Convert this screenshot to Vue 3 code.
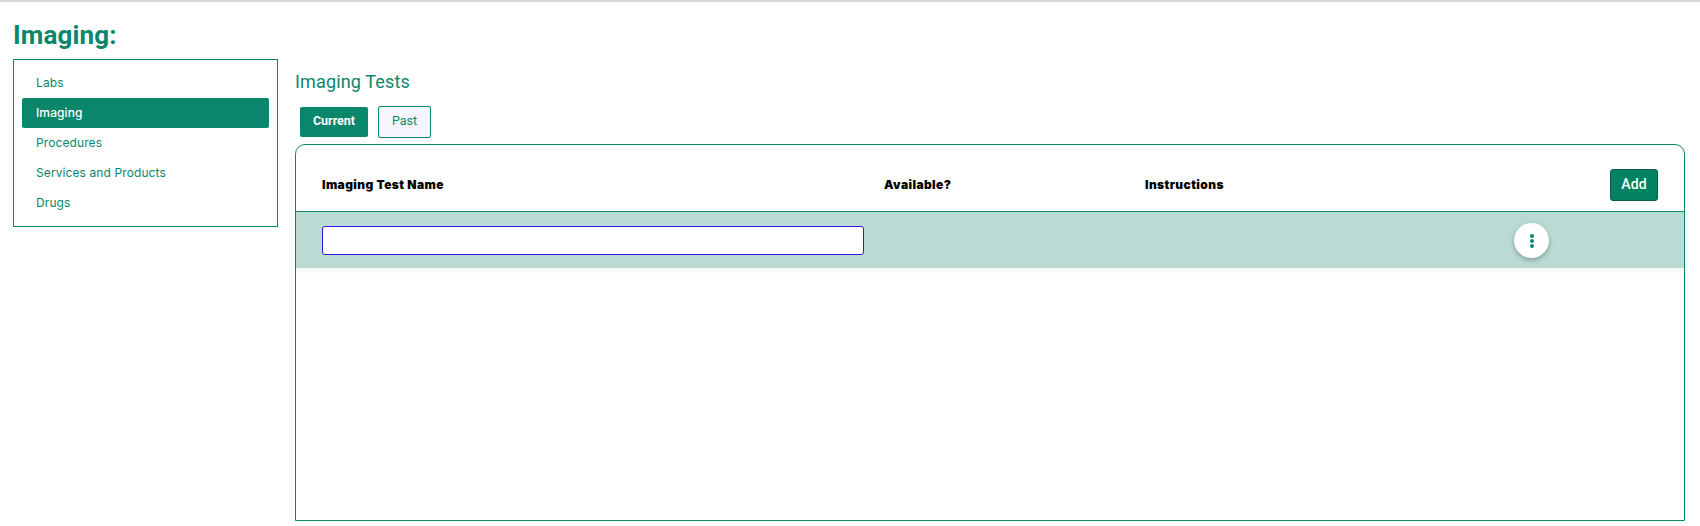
<template>
  <div class="page">
    <h1 class="page-title">Imaging:</h1>
    <div class="layout">
      <nav class="side-nav">
        <a
          v-for="item in navItems"
          :key="item"
          class="nav-item"
          :class="{ active: item === 'Imaging' }"
        >{{ item }}</a>
      </nav>

      <section class="content">
        <h2 class="section-title">Imaging Tests</h2>
        <div class="tabs">
          <button type="button" class="tab tab-on">Current</button>
          <button type="button" class="tab tab-off">Past</button>
        </div>

        <div class="table-card">
          <div class="table-head">
            <span class="col-name">Imaging Test Name</span>
            <span class="col-available">Available?</span>
            <span class="col-instructions">Instructions</span>
            <button type="button" class="btn-add">Add</button>
          </div>
          <div class="table-row">
            <input type="text" class="name-input" />
            <button type="button" class="btn-more" aria-label="More">
              <svg width="24" height="24" viewBox="0 0 24 24" fill="currentColor">
                <circle cx="12" cy="7" r="2" />
                <circle cx="12" cy="12" r="2" />
                <circle cx="12" cy="17" r="2" />
              </svg>
            </button>
          </div>
        </div>
      </section>
    </div>
  </div>
</template>

<script setup>
const navItems = ['Labs', 'Imaging', 'Procedures', 'Services and Products', 'Drugs']
</script>

<style>
html,
body {
  background: #fff;
}
</style>

<style scoped>
.page {
  height: 526px;
  box-sizing: border-box;
  border-top: 2px solid #d8d8d8;
  padding: 18px 15px 0 13px;
  font-family: Roboto, sans-serif;
  overflow: hidden;
}
.page-title {
  margin: 0 0 8px;
  font-size: 26px;
  line-height: 31px;
  font-weight: 700;
  letter-spacing: 0.15px;
  color: #0a866d;
}
.layout {
  display: flex;
  gap: 17px;
  align-items: flex-start;
}
.side-nav {
  width: 265px;
  box-sizing: border-box;
  border: 1px solid #0a866d;
  padding: 8px;
  display: flex;
  flex-direction: column;
}
.nav-item {
  height: 30px;
  line-height: 30px;
  padding-left: 14px;
  border-radius: 2px;
  font-family: Inter, sans-serif;
  font-size: 12px;
  letter-spacing: 0.1px;
  color: #0a866d;
}
.nav-item.active {
  background: #0a866d;
  color: #fff;
  font-weight: 500;
}
.content {
  flex: 1;
  min-width: 0;
}
.section-title {
  margin: 12px 0 0;
  font-size: 18px;
  line-height: 21px;
  font-weight: 450;
  letter-spacing: 0.15px;
  color: #0a866d;
}
.tabs {
  display: flex;
  align-items: center;
  gap: 10px;
  margin: 14px 0 6px 5px;
}
.tab {
  font-family: Roboto, sans-serif;
  font-size: 12.5px;
  border-radius: 2px;
  box-sizing: border-box;
  padding: 0 0 3px;
}
.tab-on {
  width: 68px;
  height: 30px;
  border: none;
  background: #0a866d;
  color: #fff;
  font-weight: 700;
}
.tab-off {
  width: 53px;
  height: 32px;
  border: 1px solid #0a866d;
  background: #f6f4fd;
  color: #0a866d;
}
.table-card {
  height: 377px;
  box-sizing: border-box;
  border: 1px solid #0a866d;
  border-radius: 10px 10px 0 0;
  overflow: hidden;
}
.table-head {
  display: flex;
  align-items: center;
  height: 67px;
  box-sizing: border-box;
  padding: 14px 26px 0 26px;
  border-bottom: 1px solid #0a866d;
  font-family: Inter, sans-serif;
  font-size: 12px;
  font-weight: 900;
  letter-spacing: 0.4px;
  color: #000;
}
.col-name {
  width: 562px;
  padding-bottom: 1px;
}
.col-available {
  width: 260px;
  padding-bottom: 1px;
}
.col-instructions {
  flex: 1;
  padding-left: 1px;
  padding-bottom: 1px;
}
.btn-add {
  width: 48px;
  height: 32px;
  padding: 0 0 2px;
  border: 1px solid #0b5c4a;
  border-radius: 3px;
  background: #048063;
  color: #fff;
  font-family: Roboto, sans-serif;
  font-size: 14px;
  font-weight: 500;
  letter-spacing: 0.2px;
}
.table-row {
  display: flex;
  align-items: center;
  height: 56px;
  box-sizing: border-box;
  padding: 1px 0 0 26px;
  background: #b9dbd4;
  box-shadow: 0 2px 6px rgba(0, 0, 0, 0.06);
}
.name-input {
  width: 542px;
  height: 29px;
  box-sizing: border-box;
  border: 1px solid #3a12e0;
  border-radius: 3px;
  background: #fff;
  outline: none;
}
.btn-more {
  width: 35px;
  height: 35px;
  margin-left: 650px;
  padding: 0;
  border: none;
  border-radius: 50%;
  background: #fff;
  color: #0a866d;
  display: flex;
  align-items: center;
  justify-content: center;
  box-shadow: 0 2px 5px rgba(0, 0, 0, 0.3);
}
</style>
